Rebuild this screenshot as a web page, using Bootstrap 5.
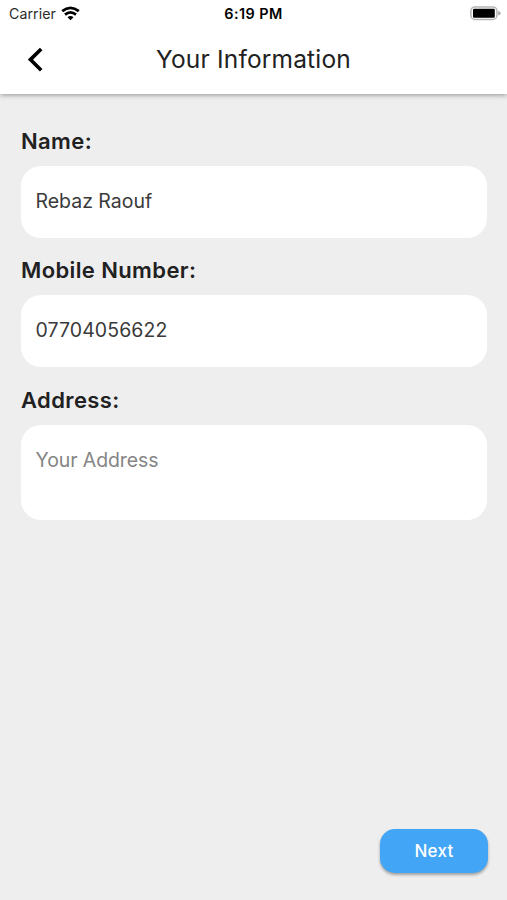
<!DOCTYPE html>
<html lang="en">
<head>
<meta charset="utf-8">
<meta name="viewport" content="width=device-width, initial-scale=1">
<title>Your Information</title>
<link href="https://cdn.jsdelivr.net/npm/bootstrap@5.3.0/dist/css/bootstrap.min.css" rel="stylesheet">
<style>
  body { font-family: Inter, "Liberation Sans", sans-serif; background: #eeeeee; color: #212121; }
  svg { display: block; flex: none; }
  .app-header { height: 94px; box-shadow: 0 1px 5px rgba(0,0,0,.38); }
  .status-bar { height: 27px; padding: 0 6px; line-height: 27px; color: #000; }
  .carrier { font-size: 14.2px; letter-spacing: .05px; margin-left: 3px; color: #2c2c2c; }
  .wifi { margin-left: 5px; }
  .clock { font-size: 14.4px; font-weight: 600; letter-spacing: .45px; }
  .title-bar { height: 66px; padding: 0 27px; }
  .page-title { font-size: 24.5px; font-weight: 400; line-height: 30px; letter-spacing: .17px; padding-bottom: 2px; }
  .side-slot { width: 60px; }
  .form-area { padding: 32px 20px 0 21px; }
  .field-label { font-size: 22px; font-weight: 600; line-height: 30px; height: 30px; letter-spacing: .38px; margin-bottom: 10px; }
  .field-group { margin-bottom: 17.4px; }
  .field-box { height: 72px; border: 0; border-radius: 20px; padding: 20px 14.5px; font-size: 19.5px; line-height: 30px; letter-spacing: -.02px; color: #3a3a3a; background: #fff; }
  .field-box.digits { letter-spacing: .08px; }
  .field-box.tall { height: 95px; }
  .field-box.hint { color: #858585; letter-spacing: -.1px; }
  .btn-next { width: 108px; height: 44px; padding: 0; border: 0; border-radius: 15px; font-size: 17px; font-weight: 500; letter-spacing: .3px; line-height: 44px; color: #fff; background: #42a5f5; box-shadow: 0 2px 3px rgba(0,0,0,.33); }
  .page-footer { padding: 0 19px 27px 0; }
</style>
</head>
<body class="vh-100 d-flex flex-column overflow-hidden">
<header class="app-header bg-white">
  <div class="status-bar row g-0 align-items-center">
    <div class="col d-flex align-items-center">
      <span class="carrier">Carrier</span>
      <svg class="wifi" width="19" height="15" viewBox="0 0 19 15" fill="none" stroke="#000" stroke-width="2.8">
        <path d="M1.2 5.2Q9.5-1.5 17.8 5.2"/>
        <path d="M4 8.6Q9.5 4.1 15 8.6"/>
        <path d="M6.5 11.2Q9.5 8.6 12.5 11.2L9.5 14.3Z" fill="#000" stroke="none"/>
      </svg>
    </div>
    <div class="col-auto clock">6:19 PM</div>
    <div class="col d-flex justify-content-end">
      <svg width="31" height="15" viewBox="0 0 31 15">
        <rect x=".9" y=".9" width="26" height="12.6" rx="4" fill="#fff" stroke="#b5b5b5" stroke-width="1.5"/>
        <rect x="3" y="2.7" width="21.8" height="9" rx="1.2" fill="#000"/>
        <path d="M28.2 4.8Q30.6 6 30.6 7.2T28.2 9.6Z" fill="#a6a6a6"/>
      </svg>
    </div>
  </div>
  <div class="title-bar d-flex align-items-center justify-content-between">
    <div class="side-slot">
      <svg width="17" height="26" viewBox="0 0 17 26" fill="none" stroke="#000" stroke-width="3.6">
        <path d="M14.2 2L3.4 12.6L14.2 23.2"/>
      </svg>
    </div>
    <h1 class="page-title m-0">Your Information</h1>
    <div class="side-slot"></div>
  </div>
</header>
<main class="form-area flex-grow-1">
  <div class="field-group">
    <div class="field-label">Name:</div>
    <div class="form-control field-box">Rebaz Raouf</div>
  </div>
  <div class="field-group">
    <div class="field-label">Mobile Number:</div>
    <div class="form-control field-box digits">07704056622</div>
  </div>
  <div class="field-group">
    <div class="field-label">Address:</div>
    <div class="form-control field-box tall hint">Your Address</div>
  </div>
</main>
<footer class="page-footer d-flex justify-content-end">
  <button type="button" class="btn btn-next">Next</button>
</footer>
<script src="https://cdn.jsdelivr.net/npm/bootstrap@5.3.0/dist/js/bootstrap.bundle.min.js"></script>
</body>
</html>
